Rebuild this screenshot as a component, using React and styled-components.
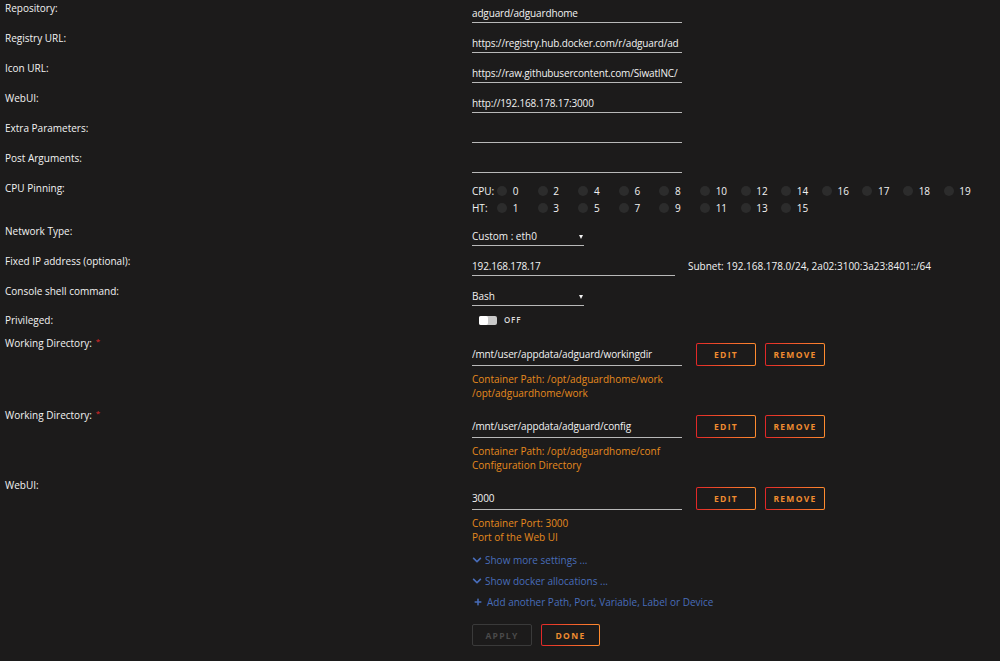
import React from "react";
import styled, { createGlobalStyle } from "styled-components";
import { FaChevronDown, FaPlus } from "react-icons/fa";

const Global = createGlobalStyle`
  html, body { margin: 0; padding: 0; background: #1c1b1b; }
  body {
    font-family: "Open Sans", "Noto Sans", sans-serif;
    font-size: 10px;
    color: #f2f2f2;
  }
  * { box-sizing: border-box; }
`;

const Page = styled.div`
  width: 1000px;
  height: 661px;
  overflow: hidden;
  padding-left: 5px;
`;

const Row = styled.div`
  display: grid;
  grid-template-columns: 467px 1fr;
  align-items: start;
  height: ${(p) => p.$h || 30}px;
`;

const Label = styled.div`
  line-height: 16px;
  white-space: nowrap;
`;

const Req = styled.sup`
  color: #e22828;
  font-size: 8px;
  margin-left: 4px;
  vertical-align: 3px;
`;

const Field = styled.div`
  padding-top: ${(p) => (p.$pt === undefined ? 4 : p.$pt)}px;
  display: flex;
  flex-direction: ${(p) => (p.$col ? "column" : "row")};
  align-items: flex-start;
`;

const TextInput = styled.input`
  display: block;
  width: ${(p) => p.$w || 210}px;
  height: ${(p) => p.$hgt || 19}px;
  padding: 0;
  margin: 0;
  border: none;
  border-bottom: 1px solid #b8b8b8;
  background: transparent;
  color: #f2f2f2;
  font: inherit;
  letter-spacing: -0.15px;
  line-height: 18px;
  outline: none;
`;

const Select = styled.div`
  width: 112px;
  height: 19px;
  line-height: 18px;
  border-bottom: 1px solid #b8b8b8;
  display: flex;
  align-items: center;
  justify-content: space-between;
  padding-right: 1px;
`;

const Caret = styled.span`
  width: 0;
  height: 0;
  border-left: 2.5px solid transparent;
  border-right: 2.5px solid transparent;
  border-top: 4px solid #f2f2f2;
  margin-top: 1px;
`;

const Side = styled.span`
  margin-left: 13px;
  line-height: 18px;
  white-space: nowrap;
`;

const CpuGrid = styled.div`
  padding-top: 2px;
  display: flex;
  flex-direction: column;
`;

const CpuLine = styled.div`
  display: flex;
  align-items: center;
  height: 17.6px;
`;

const CpuTag = styled.span`
  width: 25px;
  flex: none;
`;

const CpuItem = styled.span`
  width: 40.6px;
  flex: none;
  display: flex;
  align-items: center;
  gap: 5.7px;
`;

const Dot = styled.span`
  width: 10px;
  height: 10px;
  border-radius: 50%;
  background: #2c2c2c;
  flex: none;
`;

const ToggleWrap = styled.div`
  margin-top: 3px;
  margin-left: 7px;
  height: 10px;
  display: flex;
  align-items: center;
  gap: 7px;
`;

const Track = styled.span`
  width: 18px;
  height: 9px;
  border-radius: 2px;
  background: #c9c9c9;
  display: flex;
  align-items: center;
`;

const Knob = styled.span`
  width: 9px;
  height: 9px;
  border-radius: 2px;
  background: #ffffff;
`;

const ToggleText = styled.span`
  font-size: 8px;
  line-height: 10px;
  font-weight: 600;
  letter-spacing: 0.8px;
  color: #dcdcdc;
`;

const Controls = styled.div`
  display: flex;
  align-items: center;
`;

const Btn = styled.button`
  width: ${(p) => p.$w || 60}px;
  height: ${(p) => p.$h || 23}px;
  margin: 0 0 0 ${(p) => p.$ml || 0}px;
  padding: 0;
  border: 1px solid transparent;
  border-radius: 2px;
  background: linear-gradient(#1c1b1b, #1c1b1b) padding-box,
    linear-gradient(90deg, #e22828 0%, #ff8c2f 100%) border-box;
  color: #f08c30;
  font-family: "Open Sans", sans-serif;
  font-size: 8.5px;
  font-weight: 700;
  letter-spacing: 1.3px;
  text-transform: uppercase;
  cursor: pointer;
  flex: none;
`;

const GhostBtn = styled(Btn)`
  background: transparent;
  border: 1px solid #3a3a3a;
  color: #4a4a4a;
  cursor: default;
`;

const Help = styled.div`
  margin-top: 6px;
  color: #e68a1e;
  line-height: 14px;
  white-space: nowrap;
`;

const Links = styled.div`
  display: flex;
  flex-direction: column;
`;

const LinkLine = styled.a`
  height: 21px;
  display: flex;
  align-items: center;
  gap: ${(p) => p.$gap || 3}px;
  color: #486dba;
  text-decoration: none;
  padding-left: ${(p) => p.$pl || 0}px;
  white-space: nowrap;
`;

const Actions = styled.div`
  margin-top: 12px;
  display: flex;
  gap: 9px;
`;

const textRows = [
  ["Repository:", "adguard/adguardhome"],
  ["Registry URL:", "https://registry.hub.docker.com/r/adguard/ad"],
  ["Icon URL:", "https://raw.githubusercontent.com/SiwatINC/"],
  ["WebUI:", "http://192.168.178.17:3000"],
  ["Extra Parameters:", ""],
  ["Post Arguments:", ""],
];

const cpu = [0, 2, 4, 6, 8, 10, 12, 14, 16, 17, 18, 19];
const ht = [1, 3, 5, 7, 9, 11, 13, 15];

const configs = [
  {
    label: "Working Directory:",
    req: true,
    value: "/mnt/user/appdata/adguard/workingdir",
    help: ["Container Path: /opt/adguardhome/work", "/opt/adguardhome/work"],
  },
  {
    label: "Working Directory:",
    req: true,
    value: "/mnt/user/appdata/adguard/config",
    help: ["Container Path: /opt/adguardhome/conf", "Configuration Directory"],
  },
  {
    label: "WebUI:",
    req: false,
    value: "3000",
    help: ["Container Port: 3000", "Port of the Web UI"],
  },
];

export default function App() {
  return (
    <>
      <Global />
      <Page>
        {textRows.map(([l, v]) => (
          <Row key={l}>
            <Label>{l}</Label>
            <Field>
              <TextInput readOnly value={v} />
            </Field>
          </Row>
        ))}

        <Row $h={43}>
          <Label>CPU Pinning:</Label>
          <CpuGrid>
            <CpuLine>
              <CpuTag>CPU:</CpuTag>
              {cpu.map((n) => (
                <CpuItem key={n}>
                  <Dot />
                  {n}
                </CpuItem>
              ))}
            </CpuLine>
            <CpuLine>
              <CpuTag>HT:</CpuTag>
              {ht.map((n) => (
                <CpuItem key={n}>
                  <Dot />
                  {n}
                </CpuItem>
              ))}
            </CpuLine>
          </CpuGrid>
        </Row>

        <Row>
          <Label>Network Type:</Label>
          <Field>
            <Select>
              Custom : eth0
              <Caret />
            </Select>
          </Field>
        </Row>

        <Row>
          <Label>Fixed IP address (optional):</Label>
          <Field>
            <TextInput readOnly value="192.168.178.17" $w={203} />
            <Side>Subnet: 192.168.178.0/24, 2a02:3100:3a23:8401::/64</Side>
          </Field>
        </Row>

        <Row $h={29}>
          <Label>Console shell command:</Label>
          <Field>
            <Select>
              Bash
              <Caret />
            </Select>
          </Field>
        </Row>

        <Row $h={21}>
          <Label>Privileged:</Label>
          <ToggleWrap>
            <Track>
              <Knob />
            </Track>
            <ToggleText>OFF</ToggleText>
          </ToggleWrap>
        </Row>

        {configs.map((c, i) => (
          <Row $h={72} key={i}>
            <Label>
              {c.label}
              {c.req && <Req>*</Req>}
            </Label>
            <Field $pt={10} $col>
              <Controls>
                <TextInput readOnly value={c.value} $hgt={23} />
                <Btn $ml={14}>Edit</Btn>
                <Btn $ml={9}>Remove</Btn>
              </Controls>
              <Help>
                {c.help[0]}
                <br />
                {c.help[1]}
              </Help>
            </Field>
          </Row>
        ))}

        <Row $h={112}>
          <Label />
          <Field $pt={0} $col>
            <Links>
              <LinkLine href="#">
                <FaChevronDown size={10} />
                Show more settings ...
              </LinkLine>
              <LinkLine href="#">
                <FaChevronDown size={10} />
                Show docker allocations ...
              </LinkLine>
              <LinkLine href="#" $pl={2} $gap={5}>
                <FaPlus size={8} />
                Add another Path, Port, Variable, Label or Device
              </LinkLine>
            </Links>
            <Actions>
              <GhostBtn $h={22} disabled>
                Apply
              </GhostBtn>
              <Btn $h={22} $w={59}>
                Done
              </Btn>
            </Actions>
          </Field>
        </Row>
      </Page>
    </>
  );
}
